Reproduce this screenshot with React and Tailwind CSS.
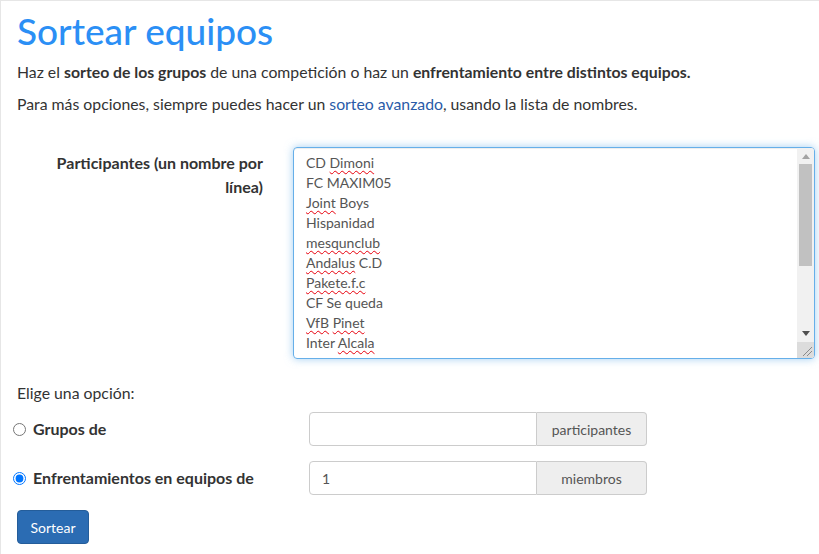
import { useState } from 'react';

const TEAMS = [
  [['CD '], ['Dimoni', true]],
  [['FC MAXIM05']],
  [['Joint', true], [' Boys']],
  [['Hispanidad']],
  [['mesqunclub', true]],
  [['Andalus', true], [' C.D']],
  [['Pakete.f.c', true]],
  [['CF Se queda']],
  [['VfB', true], [' '], ['Pinet', true]],
  [['Inter '], ['Alcala', true]],
  [['TILITILI', true]],
];

function FakeScrollbar() {
  return (
    <div className="flex w-[17px] shrink-0 flex-col bg-[#f1f1f1]">
      {/* up arrow (disabled) */}
      <div className="flex h-[16px] items-center justify-center">
        <svg width="8" height="5" viewBox="0 0 8 5">
          <path d="M0 5 L4 0 L8 5 Z" fill="#a3a3a3" />
        </svg>
      </div>
      <div className="mx-[2px] h-[102px] bg-[#c1c1c1]" />
      <div className="flex-1" />
      <div className="flex h-[17px] items-center justify-center">
        <svg width="8" height="5" viewBox="0 0 8 5">
          <path d="M0 0 L8 0 L4 5 Z" fill="#505050" />
        </svg>
      </div>
      {/* resize corner */}
      <div className="flex h-[16px] items-end justify-end bg-[#dcdcdc] p-[2px]">
        <svg width="10" height="10" viewBox="0 0 10 10">
          <path d="M10 1 L1 10 M10 5 L5 10" stroke="#8a8a8a" strokeWidth="1" />
        </svg>
      </div>
    </div>
  );
}

function InputGroup({ value, addon }) {
  return (
    <div className="flex h-[34px] w-[338px]">
      <div className="flex w-[228px] items-center rounded-l-[4px] border border-[#ccc] bg-white px-3 text-[14px] text-[#555]">
        {value}
      </div>
      <div className="flex flex-1 items-center justify-center rounded-r-[4px] border border-l-0 border-[#ccc] bg-[#eee] text-[14px] text-[#555]">
        {addon}
      </div>
    </div>
  );
}

function Radio({ checked, label, onChange }) {
  return (
    <label className="flex w-[296px] items-center gap-[7px] text-[16px] font-bold text-[#333]">
      <input
        type="radio"
        name="modo"
        checked={checked}
        onChange={onChange}
        className="m-0 h-[13px] w-[13px] accent-[#0075ff]"
      />
      {label}
    </label>
  );
}

export default function App() {
  const [modo, setModo] = useState('equipos');

  return (
    <div className="min-h-[554px] border-l border-t border-[#e6e6e6] bg-white pl-4 pt-[10px] font-['Lato','Open_Sans',sans-serif] text-[#333]">
      <h1 className="text-[37px] leading-[40px] font-medium text-[#2b8ff5]">Sortear equipos</h1>

      <p className="mt-[10px] text-[15.8px] leading-[22px]">
        Haz el <b>sorteo de los grupos</b> de una competición o haz un{' '}
        <b>enfrentamiento entre distintos equipos.</b>
      </p>
      <p className="mt-[10px] text-[15.8px] leading-[22px]">
        Para más opciones, siempre puedes hacer un{' '}
        <a href="#" className="text-[#2a5ba8]">sorteo avanzado</a>, usando la lista de nombres.
      </p>

      {/* Participantes */}
      <div className="mt-[32px] flex gap-[30px]">
        <label className="w-[246px] pl-[20px] pt-[4px] text-right text-[16px] leading-[24px] font-bold">
          Participantes (un nombre por línea)
        </label>
        <div className="flex h-[212px] w-[522px] overflow-hidden rounded-[4px] border border-[#66afe9] shadow-[inset_0_1px_1px_rgba(0,0,0,0.075),0_0_8px_rgba(102,175,233,0.6)]">
          <div className="flex-1 overflow-hidden px-3 pt-[5px] text-[14px] leading-[20px] text-[#555]">
            {TEAMS.map((parts, i) => (
              <div key={i} className="whitespace-pre">
                {parts.map(([txt, bad], j) =>
                  bad ? (
                    <span key={j} className="underline decoration-red-600 decoration-wavy decoration-1 underline-offset-[2px]">
                      {txt}
                    </span>
                  ) : (
                    <span key={j}>{txt}</span>
                  )
                )}
              </div>
            ))}
          </div>
          <FakeScrollbar />
        </div>
      </div>

      <p className="mt-[23px] text-[15.8px] leading-[22px]">Elige una opción:</p>

      <div className="ml-[-4px] mt-[8px] flex items-center">
        <Radio checked={modo === 'grupos'} label="Grupos de" onChange={() => setModo('grupos')} />
        <InputGroup value="" addon="participantes" />
      </div>

      <div className="ml-[-4px] mt-[15px] flex items-center">
        <Radio checked={modo === 'equipos'} label="Enfrentamientos en equipos de" onChange={() => setModo('equipos')} />
        <InputGroup value="1" addon="miembros" />
      </div>

      <button className="mt-[15px] h-[34px] w-[72px] rounded-[4px] border border-[#245d9a] bg-[#2b6cb3] text-[14px] text-white">
        Sortear
      </button>
    </div>
  );
}
